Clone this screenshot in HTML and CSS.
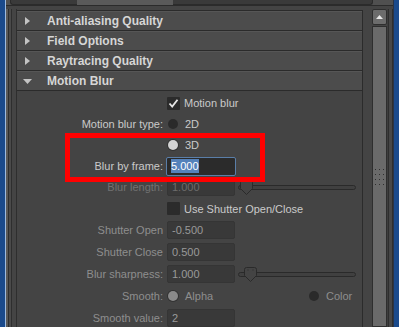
FILE: index.html
```html
<!DOCTYPE html>
<html lang="en">
<head>
    <meta charset="UTF-8">
    <meta name="viewport" content="width=device-width, initial-scale=1.0">
    <title>Render Settings</title>
    <link rel="stylesheet" href="styles.css">
</head>
<body>
    <div class="screen">
        <div class="desk desk-left"></div>
        <div class="app">
            <div class="tabbar">
                <div class="tab tab-first"></div>
                <div class="tab tab-active"></div>
                <div class="tab tab-last"></div>
            </div>
            <div class="frame">
                <div class="rail rail-left"></div>
                <div class="panel">
                    <div class="section">
                        <span class="arrow"><svg width="5" height="8" viewBox="0 0 5 8"><polygon points="0,0 5,4 0,8" fill="#c4c4c4"/></svg></span>
                        Anti-aliasing Quality
                    </div>
                    <div class="section">
                        <span class="arrow"><svg width="5" height="8" viewBox="0 0 5 8"><polygon points="0,0 5,4 0,8" fill="#c4c4c4"/></svg></span>
                        Field Options
                    </div>
                    <div class="section">
                        <span class="arrow"><svg width="5" height="8" viewBox="0 0 5 8"><polygon points="0,0 5,4 0,8" fill="#c4c4c4"/></svg></span>
                        Raytracing Quality
                    </div>
                    <div class="section">
                        <span class="arrow arrow-open"><svg width="9" height="5" viewBox="0 0 9 5"><polygon points="0,0 9,0 4.5,5" fill="#c4c4c4"/></svg></span>
                        Motion Blur
                    </div>
                    <div class="section-body">
                        <div class="row">
                            <span class="label"></span>
                            <span class="check"><svg width="13" height="13" viewBox="0 0 13 13"><path d="M2.5 6.5 L5.2 9.6 L10.5 2.8" fill="none" stroke="#e6e6e6" stroke-width="1.8"/></svg></span>
                            <span class="opt">Motion blur</span>
                        </div>
                        <div class="row row-short">
                            <span class="label">Motion blur type:</span>
                            <span class="radio"></span>
                            <span class="radio-text">2D</span>
                        </div>
                        <div class="row">
                            <span class="label"></span>
                            <span class="radio radio-on"></span>
                            <span class="radio-text">3D</span>
                        </div>
                        <div class="row row-short">
                            <span class="label">Blur by frame:</span>
                            <span class="field field-focus"><span class="selected">5.000</span></span>
                        </div>
                        <div class="row">
                            <span class="label dim">Blur length:</span>
                            <span class="field dim">1.000</span>
                            <span class="slider">
                                <span class="track"></span>
                                <svg class="thumb thumb-length" width="13" height="15" viewBox="0 0 13 15"><path d="M2.5 0.5 H10.5 Q12.5 0.5 12.5 2.5 V8.5 L6.5 14.5 L0.5 8.5 V2.5 Q0.5 0.5 2.5 0.5 Z" fill="#444444" stroke="#2a2a2a"/></svg>
                            </span>
                        </div>
                        <div class="row row-mid">
                            <span class="label"></span>
                            <span class="check"></span>
                            <span class="opt">Use Shutter Open/Close</span>
                        </div>
                        <div class="row">
                            <span class="label muted">Shutter Open</span>
                            <span class="field">-0.500</span>
                        </div>
                        <div class="row">
                            <span class="label muted">Shutter Close</span>
                            <span class="field">0.500</span>
                        </div>
                        <div class="row">
                            <span class="label muted">Blur sharpness:</span>
                            <span class="field">1.000</span>
                            <span class="slider">
                                <span class="track"></span>
                                <svg class="thumb thumb-sharp" width="13" height="15" viewBox="0 0 13 15"><path d="M2.5 0.5 H10.5 Q12.5 0.5 12.5 2.5 V8.5 L6.5 14.5 L0.5 8.5 V2.5 Q0.5 0.5 2.5 0.5 Z" fill="#444444" stroke="#2a2a2a"/><path d="M4 2.5 V3.5 M9 2.5 V3.5" stroke="#2a2a2a"/></svg>
                            </span>
                        </div>
                        <div class="row">
                            <span class="label muted">Smooth:</span>
                            <span class="choice">
                                <span class="radio radio-dim"></span>
                                <span class="radio-text muted">Alpha</span>
                            </span>
                            <span class="radio"></span>
                            <span class="radio-text muted">Color</span>
                        </div>
                        <div class="row">
                            <span class="label muted">Smooth value:</span>
                            <span class="field">2</span>
                        </div>
                        <div class="callout"></div>
                    </div>
                </div>
                <div class="gutter"></div>
                <div class="scrollbar">
                    <div class="scroll-up">
                        <svg width="7" height="4" viewBox="0 0 7 4"><polygon points="0,4 3.5,0 7,4" fill="#e8e8e8"/></svg>
                    </div>
                    <div class="scroll-thumb">
                        <svg class="grip" width="11" height="18" viewBox="0 0 11 18">
                            <g fill="#2e2e2e">
                                <rect x="1" y="1" width="1" height="1"/><rect x="5" y="1" width="1" height="1"/><rect x="9" y="1" width="1" height="1"/>
                                <rect x="1" y="6" width="1" height="1"/><rect x="5" y="6" width="1" height="1"/><rect x="9" y="6" width="1" height="1"/>
                                <rect x="1" y="11" width="1" height="1"/><rect x="5" y="11" width="1" height="1"/><rect x="9" y="11" width="1" height="1"/>
                                <rect x="1" y="16" width="1" height="1"/><rect x="5" y="16" width="1" height="1"/><rect x="9" y="16" width="1" height="1"/>
                            </g>
                        </svg>
                    </div>
                </div>
                <div class="rail rail-right"></div>
            </div>
        </div>
        <div class="desk desk-right"></div>
    </div>
</body>
</html>
```

FILE: styles.css
```css
body {
    margin: 0;
    padding: 0;
    background-color: #444444;
    font-family: "Liberation Sans", Arial, sans-serif;
    font-size: 11px;
    color: #cacaca;
    overflow: hidden;
}
.screen {
    display: flex;
    width: 399px;
    height: 327px;
    overflow: hidden;
}
.desk {
    width: 5px;
    background-color: #1a4a8c;
}
.desk-left {
    border-right: 1px solid #9dbbe0;
}
.desk-right {
    border-left: 1px solid #2a3446;
}
.app {
    flex: 1;
    display: flex;
    flex-direction: column;
    background-color: #444444;
    min-width: 0;
}
.tabbar {
    height: 5px;
    display: flex;
    background-color: #505050;
}
.tab {
    box-sizing: border-box;
    border-bottom: 1px solid #2b2b2b;
}
.tab-first {
    margin-left: 4px;
    width: 67px;
    background-color: #3a3a3a;
    border-left: 1px solid #2b2b2b;
    border-bottom-left-radius: 3px;
}
.tab-active {
    width: 96px;
    background-color: #5a5a5a;
    border-bottom: none;
}
.tab-last {
    width: 200px;
    background-color: #3a3a3a;
    border-right: 1px solid #2b2b2b;
    border-bottom-right-radius: 3px;
}
.frame {
    flex: 1;
    display: flex;
    border-top: 1px solid #2b2b2b;
    padding-top: 3px;
    min-height: 0;
}
.rail-left {
    width: 11px;
    background: linear-gradient(to right, #5a5a5a 0 2px, #2e2e2e 2px 3px, #4a4a4a 3px 5px, #2e2e2e 5px 6px, #444444 6px 10px, #2e2e2e 10px 11px);
}
.rail-right {
    width: 6px;
    background: linear-gradient(to right, #3e3e3e 0 1px, #2e2e2e 1px 2px, #474747 2px 5px, #2e2e2e 5px 6px);
}
.panel {
    width: 346px;
    box-sizing: border-box;
    margin-top: 1px;
    border-top: 1px solid #2b2b2b;
    border-right: 1px solid #2b2b2b;
    display: flex;
    flex-direction: column;
}
.section {
    height: 20px;
    box-sizing: border-box;
    padding-top: 1px;
    line-height: 18px;
    border-bottom: 1px solid #2b2b2b;
    background-color: #4c4c4c;
    box-shadow: inset 0 1px 0 #565656;
    font-size: 12px;
    font-weight: bold;
    color: #d6d6d6;
    display: flex;
    align-items: center;
}
.arrow {
    width: 22px;
    padding-left: 8px;
    display: flex;
    align-items: center;
}
.arrow-open {
    width: 24px;
    padding-left: 6px;
}
.section-body {
    flex: 1;
    position: relative;
    padding-top: 1px;
    background-color: #444444;
}
.row {
    height: 22px;
    display: flex;
    align-items: center;
    white-space: nowrap;
}
.row-short {
    height: 20px;
}
.row-mid {
    height: 21px;
}
.label {
    flex: 0 0 146px;
    margin-right: 4px;
    text-align: right;
}
.muted {
    color: #8e8e8e;
}
.dim {
    color: #727272;
}
.check {
    width: 13px;
    height: 13px;
    background-color: #2b2b2b;
    border-radius: 1px;
    display: flex;
}
.opt {
    margin-left: 4px;
}
.radio {
    width: 10px;
    height: 10px;
    margin-left: 1px;
    border-radius: 50%;
    background-color: #2a2a2a;
}
.radio-on {
    background-color: #d4d4d4;
    box-shadow: 0 0 0 1px #333333;
}
.radio-dim {
    background-color: #8a8a8a;
    box-shadow: 0 0 0 1px #333333;
}
.radio-text {
    margin-left: 7px;
}
.choice {
    width: 141px;
    display: flex;
    align-items: center;
}
.field {
    width: 68px;
    height: 18px;
    box-sizing: border-box;
    padding-left: 4px;
    line-height: 16px;
    background-color: #393939;
    border: 1px solid #353535;
    border-radius: 2px;
    color: #9a9a9a;
}
.field.dim {
    color: #6c6c6c;
}
.field-focus {
    width: 70px;
    height: 19px;
    margin-left: -1px;
    padding-left: 4px;
    line-height: 17px;
    background-color: #2b2b2b;
    border: 1px solid #5a7ea8;
}
.selected {
    background-color: #5582bb;
    color: #ffffff;
    padding: 1px 0;
}
.slider {
    position: relative;
    width: 118px;
    height: 15px;
    margin-left: 3px;
    display: flex;
    align-items: center;
}
.track {
    flex: 1;
    height: 5px;
    box-sizing: border-box;
    border: 1px solid #2a2a2a;
    border-radius: 3px;
    background-color: #404040;
}
.thumb {
    position: absolute;
    top: 0;
}
.thumb-length {
    left: 2px;
}
.thumb-sharp {
    left: 6px;
}
.callout {
    position: absolute;
    left: 48px;
    top: 42px;
    width: 200px;
    height: 49px;
    box-sizing: border-box;
    border: 5px solid #ff0000;
}
.gutter {
    width: 9px;
}
.scrollbar {
    width: 15px;
    display: flex;
    flex-direction: column;
}
.scroll-up {
    height: 16px;
    box-sizing: border-box;
    background-color: #6c6c6c;
    border: 1px solid #2e2e2e;
    border-radius: 2px;
    display: flex;
    align-items: center;
    justify-content: center;
}
.scroll-thumb {
    flex: 1;
    margin-top: 1px;
    box-sizing: border-box;
    background-color: #6a6a6a;
    border: 1px solid #2e2e2e;
    padding-top: 141px;
    padding-left: 1px;
}
.grip {
    display: block;
}
```
